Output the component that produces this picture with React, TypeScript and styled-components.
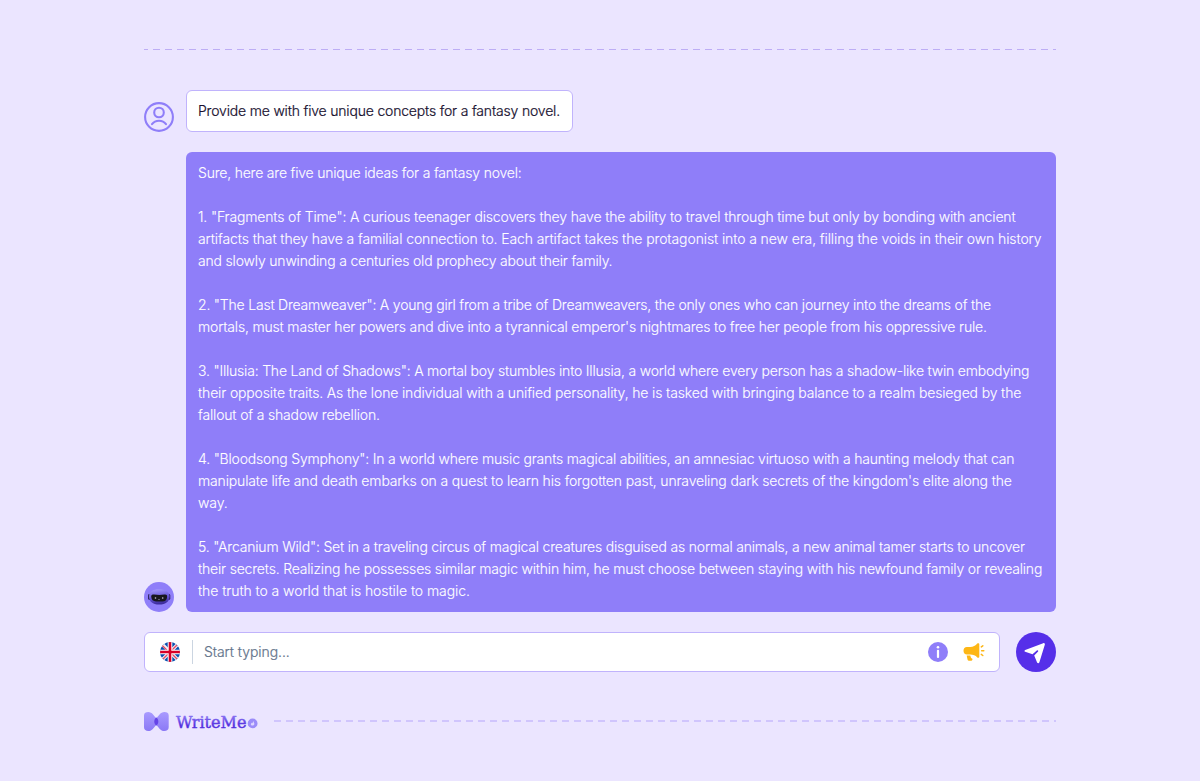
import React from "react";
import styled, { createGlobalStyle } from "styled-components";

const ideas = [
  [{ text: `Sure, here are five unique ideas for a fantasy novel:`, tracking: -0.207 }],
  [
    { text: `1. "Fragments of Time": A curious teenager discovers they have the ability to travel through time but only by bonding with ancient`, tracking: -0.154 },
    { text: `artifacts that they have a familial connection to. Each artifact takes the protagonist into a new era, filling the voids in their own history`, tracking: -0.107 },
    { text: `and slowly unwinding a centuries old prophecy about their family.`, tracking: -0.182 },
  ],
  [
    { text: `2. "The Last Dreamweaver": A young girl from a tribe of Dreamweavers, the only ones who can journey into the dreams of the`, tracking: -0.204 },
    { text: `mortals, must master her powers and dive into a tyrannical emperor's nightmares to free her people from his oppressive rule.`, tracking: -0.182 },
  ],
  [
    { text: `3. "Illusia: The Land of Shadows": A mortal boy stumbles into Illusia, a world where every person has a shadow-like twin embodying`, tracking: -0.2 },
    { text: `their opposite traits. As the lone individual with a unified personality, he is tasked with bringing balance to a realm besieged by the`, tracking: -0.145 },
    { text: `fallout of a shadow rebellion.`, tracking: -0.17 },
  ],
  [
    { text: `4. "Bloodsong Symphony": In a world where music grants magical abilities, an amnesiac virtuoso with a haunting melody that can`, tracking: -0.19 },
    { text: `manipulate life and death embarks on a quest to learn his forgotten past, unraveling dark secrets of the kingdom's elite along the`, tracking: -0.15 },
    { text: `way.`, tracking: -0.1 },
  ],
  [
    { text: `5. "Arcanium Wild": Set in a traveling circus of magical creatures disguised as normal animals, a new animal tamer starts to uncover`, tracking: -0.19 },
    { text: `their secrets. Realizing he possesses similar magic within him, he must choose between staying with his newfound family or revealing`, tracking: -0.187 },
    { text: `the truth to a world that is hostile to magic.`, tracking: -0.075 },
  ],
];

const UserIcon = () => (
  <svg width="30" height="30" viewBox="0 0 30 30" fill="none" stroke="#8f7ef9" strokeWidth="2.1">
    <circle cx="15" cy="15" r="13.9" />
    <circle cx="15" cy="10.5" r="4.8" />
    <path d="M8 22.2C9.6 20 12 18.8 15 18.8S20.4 20 22 22.2" strokeLinecap="round" />
  </svg>
);

const RobotIcon = () => (
  <svg width="30" height="30" viewBox="0 0 30 30">
    <defs>
      <linearGradient id="helmet" x1="0" y1="0" x2="0.2" y2="1">
        <stop offset="0" stopColor="#aaa0ff" />
        <stop offset="0.6" stopColor="#6656d8" />
        <stop offset="1" stopColor="#3d2c9c" />
      </linearGradient>
    </defs>
    <circle cx="15" cy="15" r="15" fill="#8f7ef9" />
    <rect x="4" y="12" width="3" height="6" rx="1.4" fill="#30275f" />
    <rect x="23.3" y="12" width="3" height="6" rx="1.4" fill="#30275f" />
    <path d="M5 14.5C5 9.8 9 7.3 15 7.3S25.5 9.8 25.5 14.5 22 22.6 15.2 22.6 5 19.2 5 14.5Z" fill="url(#helmet)" />
    <path d="M7.2 14.6C7.2 12.9 8.5 12.5 10 12.6C13.6 13 17 13 20.5 12.6C22.3 12.4 23.3 13 23.1 14.9C22.9 18.2 21 19.5 18.5 19.5H12C9.2 19.5 7.3 17.8 7.2 14.6Z" fill="#17161d" />
    <circle cx="11.5" cy="16" r=".8" fill="#c9c6d8" />
    <circle cx="18.7" cy="16" r=".8" fill="#c9c6d8" />
    <path d="M14 17.3Q15 18 16 17.3" stroke="#aaa6bd" strokeWidth=".5" fill="none" />
  </svg>
);

const FlagIcon = () => (
  <svg width="20" height="20" viewBox="0 0 20 20">
    <clipPath id="disc">
      <circle cx="10" cy="10" r="10" />
    </clipPath>
    <g clipPath="url(#disc)">
      <rect width="20" height="20" fill="#0a51b0" />
      <path d="M0 0L20 20M20 0L0 20" stroke="#f3f2f7" strokeWidth="3.4" />
      <path d="M2 3.2L8 9.2M12 12L18 18M18 2L12 8M8 12L2 18" stroke="#e34c65" strokeWidth="1.4" />
      <path d="M10 0V20M0 10H20" stroke="#fff" strokeWidth="4.6" />
      <path d="M10 0V20M0 10H20" stroke="#d80027" strokeWidth="2.6" />
    </g>
  </svg>
);

const InfoIcon = () => (
  <svg width="20" height="20" viewBox="0 0 20 20">
    <circle cx="10" cy="10" r="10" fill="#8f7ef9" />
    <circle cx="10" cy="5.3" r="1.3" fill="#fff" />
    <rect x="8.9" y="7.8" width="2.2" height="8.2" rx="1" fill="#fff" />
  </svg>
);

const MegaphoneIcon = () => (
  <svg width="22" height="20" viewBox="0 0 22 20" fill="#fdb615">
    <path d="M3.9 5H7.2C10.2 5 12.5 3.7 14.3 1.6C15 .9 16.3 1.3 16.3 2.3V14.8C16.3 15.8 15 16.2 14.3 15.4C12.5 13.4 10.2 12.6 7.2 12.6H3.9C1.8 12.6.5 11 .5 8.8S1.8 5 3.9 5Z" />
    <path d="M3.7 13.4H7.3C7.6 15 8 16 9.1 16.6C9.8 17 9.5 18.7 8.5 18.7H5.7C5 18.7 4.6 18.3 4.5 17.6Z" />
    <path d="M18.3 4.9L19.8 3.8M18.6 8.8H20.8M18.3 12.4L19.8 13.5" stroke="#fdb615" strokeWidth="1.5" strokeLinecap="round" />
  </svg>
);

const PlaneIcon = () => (
  <svg width="40" height="40" viewBox="0 0 40 40">
    <path d="M9.2 18L27.2 11.2C28.3 10.8 29.2 11.6 28.8 12.8L23.4 30.2C23 31.4 21.6 31.5 21.1 30.4L18.2 23.6L21.9 19.8C22.8 18.8 21.8 17.7 20.8 18.5L16.5 22.2L9.2 19.8C8.2 19.4 8.2 18.4 9.2 18Z" fill="#fff" />
  </svg>
);

const Logo = () => (
  <svg width="114" height="22" viewBox="0 0 114 22">
    <defs>
      <linearGradient id="wing" x1="0" y1="0" x2="0" y2="1">
        <stop offset="0" stopColor="#a99aff" />
        <stop offset="1" stopColor="#8b79f5" />
      </linearGradient>
      <linearGradient id="word" gradientUnits="userSpaceOnUse" x1="0" y1="4" x2="0" y2="18">
        <stop offset="0.1" stopColor="#8b76f3" />
        <stop offset="0.8" stopColor="#5330df" />
      </linearGradient>
    </defs>
    <path d="M0 5.5C0 2.8 2 2 4.2 2C8.5 2 9.6 6 12.3 8C15 6 16.2 2 20.4 2C22.8 2 24.7 2.8 24.7 5.5V17.3C24.7 20 22.8 21 20.4 21C16.2 21 15 17.3 12.3 15.2C9.6 17.3 8.5 21 4.2 21C2 21 0 20 0 17.3Z" fill="url(#wing)" />
    <path d="M12.3 7.6C13.7 8.6 14.3 9.9 14.3 11.6S13.7 14.5 12.3 15.6C10.9 14.5 10.3 13.3 10.3 11.6S10.9 8.6 12.3 7.6Z" fill="#6543e7" />
    <text x="32" y="17.5" textLength="70.5" lengthAdjust="spacingAndGlyphs" fontFamily="'DejaVu Serif', serif" fontSize="17.5" fontWeight="400" fill="url(#word)" stroke="url(#word)" strokeWidth=".45">
      WriteMe
    </text>
    <circle cx="108.6" cy="13.4" r="4.9" fill="#9b8cf9" />
    <path d="M106.8 14.2L107.6 12.8L108.5 13.2L109.2 11L110.4 13.8C110.4 15 109.6 15.6 108.5 15.6S107 15 106.8 14.2Z" fill="#ded7ff" />
  </svg>
);

const App = () => (
  <>
    <GlobalStyle />
    <Page>
      <DashedLine />
      <Chat>
        <Message>
          <UserIcon />
          <Question>Provide me with five unique concepts for a fantasy novel.</Question>
        </Message>
        <Message>
          <RobotIcon />
          <Answer>
            {ideas.map((lines) => (
              <Paragraph key={lines[0].text}>
                {lines.map((line) => (
                  <Line key={line.text} $tracking={line.tracking}>
                    {line.text}
                  </Line>
                ))}
              </Paragraph>
            ))}
          </Answer>
        </Message>
      </Chat>
      <Composer>
        <InputBar>
          <FlagIcon />
          <Divider />
          <Placeholder>Start typing...</Placeholder>
          <InfoIcon />
          <MegaphoneIcon />
        </InputBar>
        <SendButton aria-label="Send">
          <PlaneIcon />
        </SendButton>
      </Composer>
      <Footer>
        <Logo />
        <DashedLine $light />
      </Footer>
    </Page>
  </>
);

const GlobalStyle = createGlobalStyle`
  * {
    box-sizing: border-box;
  }
  body {
    margin: 0;
    background: #ebe5ff;
    font-family: Inter, sans-serif;
    font-weight: 300;
  }
  svg {
    display: block;
    flex-shrink: 0;
  }
`;
const Page = styled.main`
  width: 1200px;
  height: 781px;
  padding: 49px 144px 0;
  background: #ebe5ff;
`;
const DashedLine = styled.div<{ $light?: boolean }>`
  flex: 1;
  height: ${({ $light }) => ($light ? 2 : 1)}px;
  background: repeating-linear-gradient(
    to right,
    ${({ $light }) => ($light ? "#d0c5fd" : "#bdadf5")} 0 7px,
    transparent 7px 12px
  );
  background-position-x: ${({ $light }) => ($light ? 0 : -3)}px;
`;
const Chat = styled.section`
  display: flex;
  flex-direction: column;
  gap: 20px;
  margin-top: 40px;
`;
const Message = styled.div`
  display: flex;
  align-items: flex-end;
  gap: 12px;
`;
const Question = styled.div`
  width: 387px;
  height: 42px;
  padding: 0 11px;
  border: 1px solid #c0b3fc;
  border-radius: 6px;
  background: #fff;
  color: #170f2e;
  font-size: 14px;
  line-height: 40px;
  letter-spacing: -0.185px;
  white-space: nowrap;
  -webkit-text-stroke: 0.2px;
`;
const Answer = styled.div`
  flex: 1;
  min-width: 0;
  height: 460px;
  padding: 10px 12px;
  border-radius: 6px;
  background: #8f7ef9;
  color: #fff;
`;
const Paragraph = styled.p`
  margin: 0 0 22px;
  font-size: 14px;
  line-height: 22px;
`;
const Line = styled.span<{ $tracking: number }>`
  display: block;
  letter-spacing: ${({ $tracking }) => $tracking}px;
  white-space: nowrap;
  -webkit-text-stroke: 0.1px;
`;
const Composer = styled.div`
  display: flex;
  gap: 16px;
  margin-top: 20px;
`;
const InputBar = styled.div`
  display: flex;
  flex: 1;
  align-items: center;
  height: 40px;
  padding: 0 14px 0 15px;
  border: 1px solid #c0b3fc;
  border-radius: 6px;
  background: #fff;

  svg:last-child {
    margin-left: 15px;
  }
`;
const Divider = styled.div`
  width: 1px;
  height: 24px;
  margin: 0 11px 0 12px;
  background: #cbd5e1;
`;
const Placeholder = styled.span`
  flex: 1;
  color: #64748b;
  font-size: 14px;
  letter-spacing: -0.06px;
  line-height: 22px;
  -webkit-text-stroke: 0.2px;
`;
const SendButton = styled.button`
  width: 40px;
  height: 40px;
  padding: 0;
  border: 0;
  border-radius: 50%;
  background: #562fe9;
`;
const Footer = styled.footer`
  display: flex;
  align-items: center;
  gap: 16px;
  height: 22px;
  margin-top: 38px;
`;

export default App;
